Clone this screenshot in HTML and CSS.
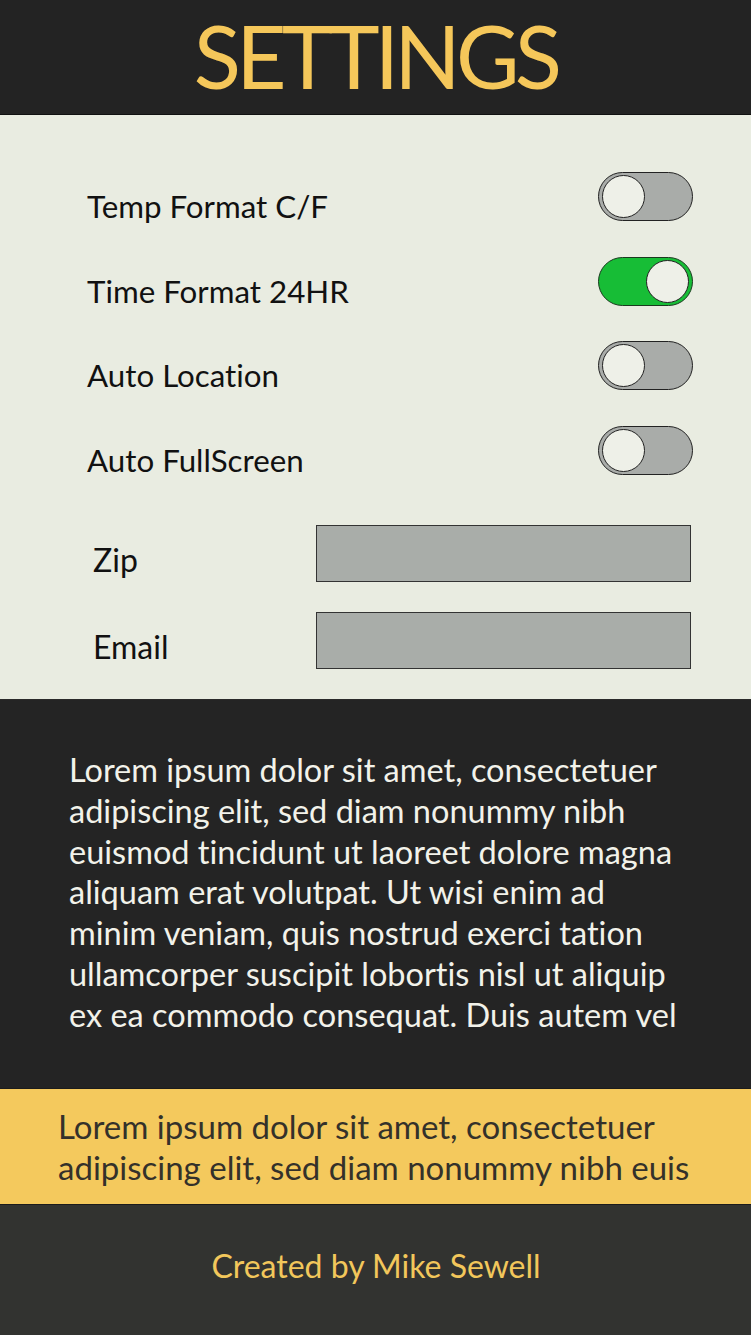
FILE: index.html
```html
<!DOCTYPE html>
<html lang="en">
<head>
<meta charset="utf-8">
<title>Settings</title>
<link rel="stylesheet" href="styles.css">
</head>
<body>
<div class="app">
  <header class="topbar">
    <h1 class="title">SETTINGS</h1>
  </header>

  <section class="settings">
    <div class="toggle-row">
      <span class="label">Temp Format C/F</span>
      <span class="switch"><span class="knob"></span></span>
    </div>
    <div class="toggle-row">
      <span class="label">Time Format 24HR</span>
      <span class="switch on"><span class="knob"></span></span>
    </div>
    <div class="toggle-row">
      <span class="label">Auto Location</span>
      <span class="switch"><span class="knob"></span></span>
    </div>
    <div class="toggle-row">
      <span class="label">Auto FullScreen</span>
      <span class="switch"><span class="knob"></span></span>
    </div>

    <div class="field">
      <label class="field-label" for="zip">Zip</label>
      <input class="field-input" id="zip" type="text">
    </div>
    <div class="field">
      <label class="field-label" for="email">Email</label>
      <input class="field-input" id="email" type="text">
    </div>
  </section>

  <section class="about">
    <p class="about-text">Lorem ipsum dolor sit amet, consectetuer<br>adipiscing elit, sed diam nonummy nibh<br>euismod tincidunt ut laoreet dolore magna<br>aliquam erat volutpat. Ut wisi enim ad<br>minim veniam, quis nostrud exerci tation<br>ullamcorper suscipit lobortis nisl ut aliquip<br>ex ea commodo consequat. Duis autem vel</p>
  </section>

  <section class="note">
    <p class="note-text">Lorem ipsum dolor sit amet, consectetuer<br>adipiscing elit, sed diam nonummy nibh euis</p>
  </section>

  <footer class="footer">
    <p class="credit">Created by Mike Sewell</p>
  </footer>
</div>
</body>
</html>
```

FILE: styles.css
```css
* {
  box-sizing: border-box;
}

html, body {
  margin: 0;
  padding: 0;
}

body {
  background: #e9ece1;
  font-family: Lato, "Open Sans", "Liberation Sans", sans-serif;
  font-variant-ligatures: none;
  width: 751px;
  height: 1335px;
  overflow: hidden;
}

.app {
  width: 751px;
  display: flex;
  flex-direction: column;
}

.topbar {
  height: 115px;
  background: #232323;
  border-bottom: 1px solid #111;
  display: flex;
  justify-content: center;
  align-items: center;
}

.title {
  margin: 0;
  color: #f5c75a;
  font-weight: 400;
  font-size: 87px;
  line-height: 1;
  letter-spacing: -4.8px;
  padding-left: 0;
  padding-bottom: 4px;
}

.settings {
  height: 585px;
  background: #e9ece1;
  border-bottom: 1px solid #2a2a2a;
  padding: 57px 58px 0 87px;
  display: flex;
  flex-direction: column;
}

.toggle-row {
  display: flex;
  justify-content: space-between;
  align-items: flex-start;
  height: 49px;
  margin-bottom: 35.5px;
}

.label {
  color: #111;
  font-size: 31.3px;
  line-height: 36px;
  margin-top: 16px;
}

.switch {
  position: relative;
  width: 95px;
  height: 49px;
  border-radius: 25px;
  border: 1.5px solid #222;
  background: #a9aca9;
  flex: none;
}

.switch.on {
  background: #17bd36;
  border-color: #1a3a1e;
}

.knob {
  position: absolute;
  top: 2px;
  left: 3px;
  width: 43px;
  height: 43px;
  border-radius: 50%;
  background: #eef0e8;
  border: 1.5px solid #222;
}

.switch.on .knob {
  left: auto;
  right: 3px;
}

.field {
  display: flex;
  align-items: center;
  margin-left: 6px;
  height: 57px;
}

.toggle-row + .field {
  margin-top: 15px;
}

.field + .field {
  margin-top: 30px;
}

.field-label {
  width: 223px;
  color: #111;
  font-size: 32px;
  line-height: 36px;
  padding-top: 13px;
}

.field-input {
  width: 375px;
  height: 57px;
  background: #a9ada9;
  border: 1px solid #333;
  margin: 0;
  padding: 0;
  font: inherit;
}

.about {
  height: 388px;
  background: #242424;
  padding: 50px 0 0 69px;
}

.about-text {
  margin: 0;
  color: #f2f2ea;
  font-size: 32.5px;
  line-height: 40.8px;
  white-space: nowrap;
}

.note {
  height: 117px;
  background: #f4c95d;
  border-top: 1px solid #1c1c1c;
  border-bottom: 1px solid #1c1c1c;
  padding: 17px 0 0 58px;
}

.note-text {
  margin: 0;
  color: #34312a;
  font-size: 33px;
  line-height: 41px;
  white-space: nowrap;
}

.footer {
  height: 130px;
  background: #323330;
  display: flex;
  justify-content: center;
  align-items: center;
}

.credit {
  margin: 0;
  color: #f2c75b;
  font-size: 32px;
  line-height: 1;
  padding-bottom: 8px;
  padding-left: 1px;
}
```
